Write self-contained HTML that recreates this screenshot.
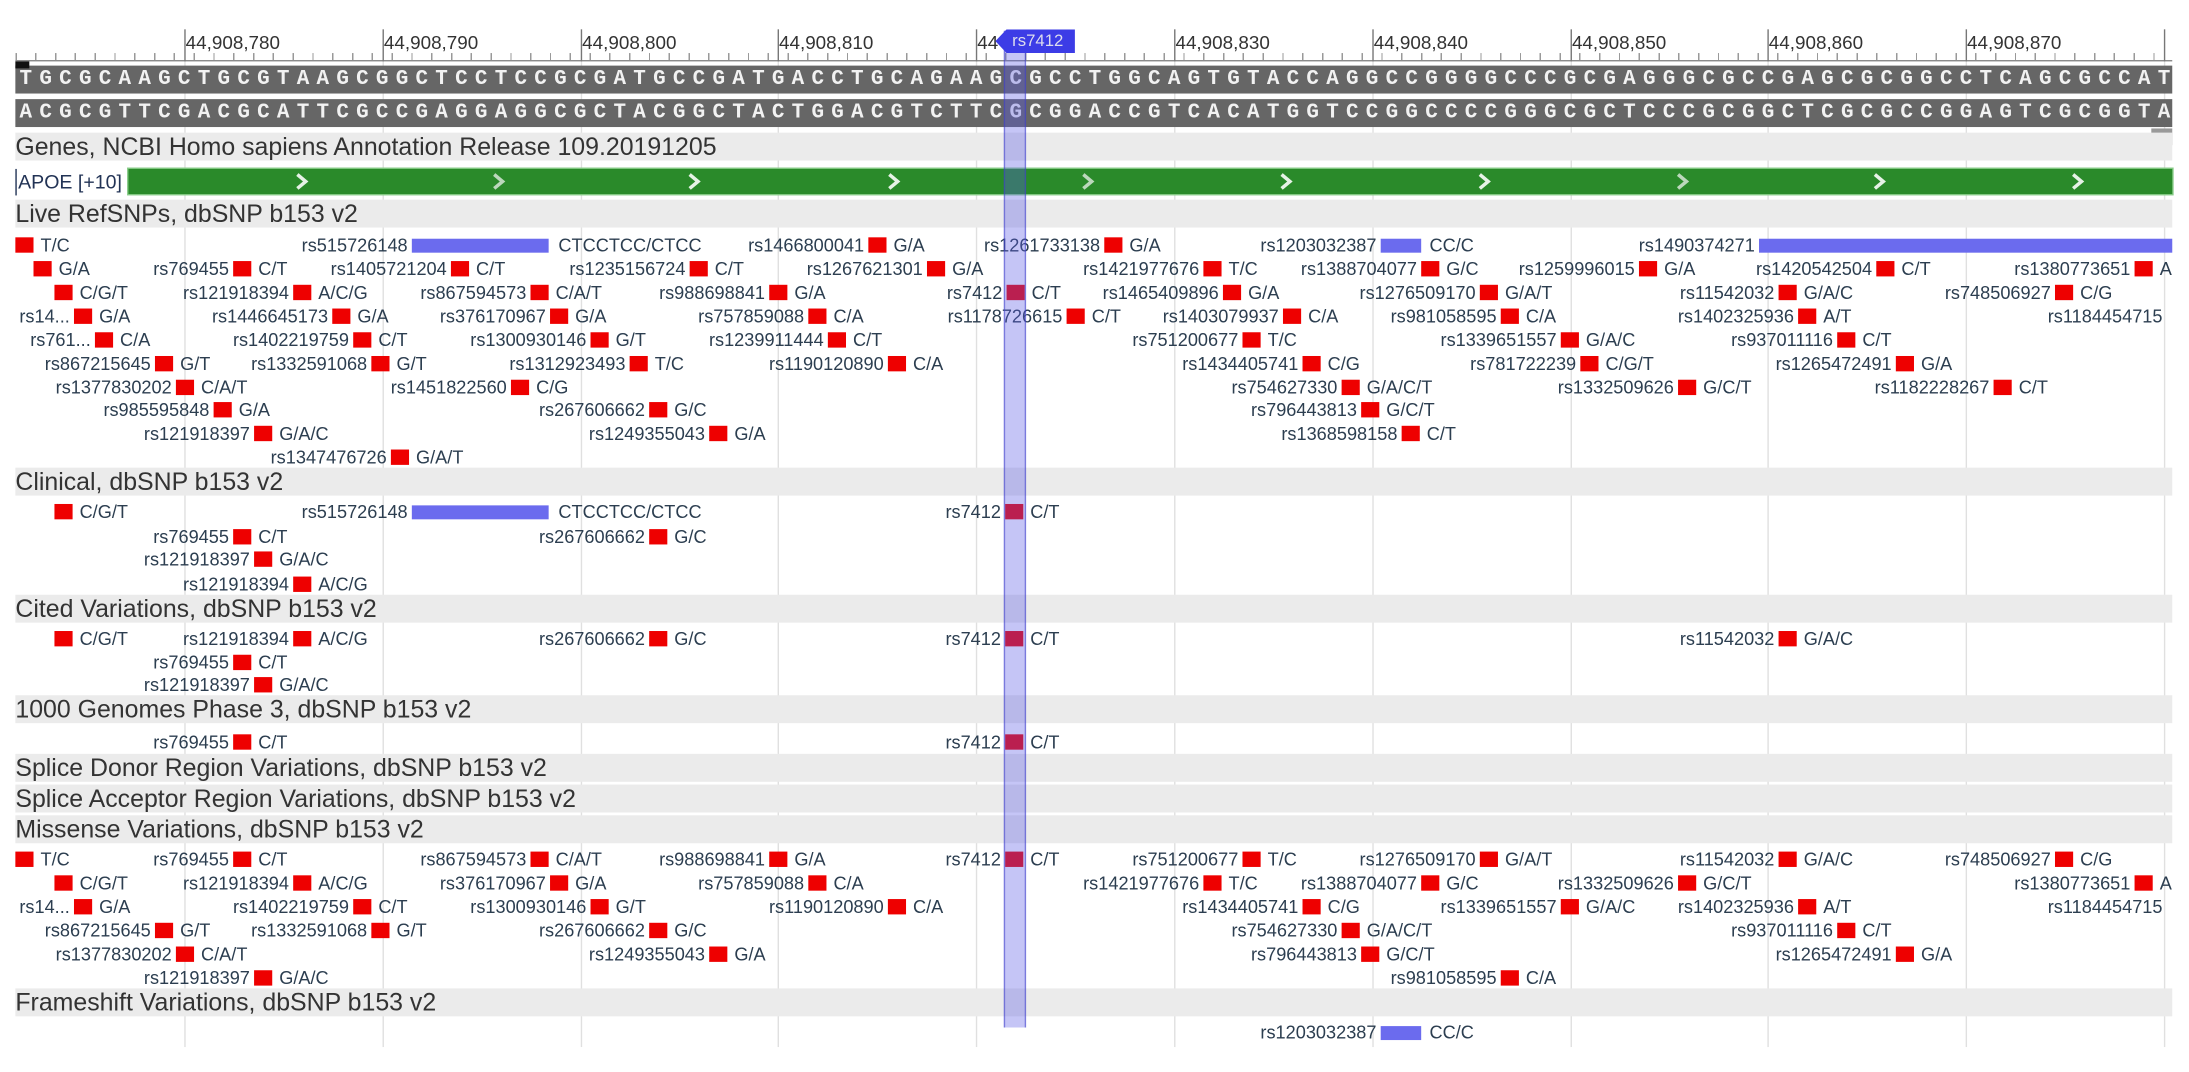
<!DOCTYPE html>
<html><head><meta charset="utf-8">
<style>
html,body{margin:0;padding:0;background:#fff;width:2189px;height:1072px;overflow:hidden}
#w{position:absolute;left:0;top:0;width:1568px;height:768px;transform:scale(1.39605);transform-origin:0 0;font-family:"Liberation Sans",sans-serif}
.a{position:absolute}
.h{position:absolute;left:11px;width:1545px;height:20px;background:#ebebeb;color:#333;font-size:18px;line-height:20px;white-space:nowrap}
.h span{display:inline-block;transform:scaleX(.99);transform-origin:0 50%}
.g{position:absolute;top:44px;height:706px;width:1px;background:#e0e0e0}
.s{position:absolute;height:16px;line-height:16px;font-size:13px;color:#2c3e50;white-space:nowrap}
.s b{font-weight:normal;position:absolute;right:100%;padding-right:3px}
.s i{display:inline-block;width:13px;height:11px;background:#e00;vertical-align:middle;margin-right:5px;position:relative;top:-1px}
.s i.bl{background:#6b6bee;height:10px}
.seq{position:absolute;left:11px;width:1545px;height:20px;background:#666;color:#f2f2f2;font-family:"Liberation Mono",monospace;font-weight:bold;font-size:15px;line-height:20px;letter-spacing:5.18px;padding-left:3px;box-sizing:border-box;white-space:nowrap;overflow:hidden}
.rl{position:absolute;top:23px;font-size:13.5px;color:#333}
.mt{position:absolute;top:21px;height:23px;width:1px;background:#777}
</style></head><body><div id="w">

<!-- grid -->
<div class="g" style="left:132px"></div><div class="g" style="left:274px"></div><div class="g" style="left:416px"></div><div class="g" style="left:557px"></div><div class="g" style="left:699px"></div><div class="g" style="left:841px"></div><div class="g" style="left:983px"></div><div class="g" style="left:1125px"></div><div class="g" style="left:1266px"></div><div class="g" style="left:1408px"></div><div class="g" style="left:1550px"></div>

<!-- ruler -->
<div class="a" style="left:11px;top:43px;width:1545px;height:1px;background:#888"></div>
<div class="a" style="left:11px;top:38px;width:1545px;height:5px;background:repeating-linear-gradient(90deg,#999 0,#999 1px,transparent 1px,transparent 14.18px)"></div>
<div class="mt" style="left:132px"></div><div class="rl" style="left:133px">44,908,780</div>
<div class="mt" style="left:274px"></div><div class="rl" style="left:275px">44,908,790</div>
<div class="mt" style="left:416px"></div><div class="rl" style="left:417px">44,908,800</div>
<div class="mt" style="left:557px"></div><div class="rl" style="left:558px">44,908,810</div>
<div class="mt" style="left:699px"></div><div class="rl" style="left:700px">44</div>
<div class="mt" style="left:841px"></div><div class="rl" style="left:842px">44,908,830</div>
<div class="mt" style="left:983px"></div><div class="rl" style="left:984px">44,908,840</div>
<div class="mt" style="left:1125px"></div><div class="rl" style="left:1126px">44,908,850</div>
<div class="mt" style="left:1266px"></div><div class="rl" style="left:1267px">44,908,860</div>
<div class="mt" style="left:1408px"></div><div class="rl" style="left:1409px">44,908,870</div>
<div class="mt" style="left:1550px"></div>

<!-- sequences -->
<div class="seq" style="top:47px">TGCGCAAGCTGCGTAAGCGGCTCCTCCGCGATGCCGATGACCTGCAGAAGCGCCTGGCAGTGTACCAGGCCGGGGCCCGCGAGGGCGCCGAGCGCGGCCTCAGCGCCAT</div>
<div class="seq" style="top:71px">ACGCGTTCGACGCATTCGCCGAGGAGGCGCTACGGCTACTGGACGTCTTCGCGGACCGTCACATGGTCCGGCCCCGGGCGCTCCCGCGGCTCGCGCCGGAGTCGCGGTA</div>
<div class="a" style="left:11px;top:44px;width:10px;height:5px;background:#111"></div>
<div class="a" style="left:1541px;top:92px;width:15px;height:12px;background:#999"></div>

<!-- headers -->
<div class="h" style="top:95px"><span>Genes, NCBI Homo sapiens Annotation Release 109.20191205</span></div>
<div class="h" style="top:143px"><span>Live RefSNPs, dbSNP b153 v2</span></div>
<div class="h" style="top:335px"><span>Clinical, dbSNP b153 v2</span></div>
<div class="h" style="top:426px"><span>Cited Variations, dbSNP b153 v2</span></div>
<div class="h" style="top:498px"><span>1000 Genomes Phase 3, dbSNP b153 v2</span></div>
<div class="h" style="top:540px"><span>Splice Donor Region Variations, dbSNP b153 v2</span></div>
<div class="h" style="top:562px"><span>Splice Acceptor Region Variations, dbSNP b153 v2</span></div>
<div class="h" style="top:584px"><span>Missense Variations, dbSNP b153 v2</span></div>
<div class="h" style="top:708px"><span>Frameshift Variations, dbSNP b153 v2</span></div>

<!-- APOE -->
<div class="a" style="left:11px;top:121px;height:19px;border-left:1px solid #235;font-size:14px;line-height:19px;color:#235;padding-left:1px">APOE [+10]</div>
<div class="a" style="left:92px;top:121px;width:1464px;height:18px;background:#2a8a2a;box-shadow:0 0 0 1px #8c8"></div>
<svg class="a" style="left:0;top:121px" width="1568" height="18">
<g fill="none" stroke="#e6f2e6" stroke-width="2.5">
<polyline points="213,4 219,9 213,14"/><polyline points="354,4 360,9 354,14" stroke="#bcd8bc"/><polyline points="494,4 500,9 494,14"/><polyline points="637,4 643,9 637,14"/><polyline points="776,4 782,9 776,14" stroke="#bcd8bc"/><polyline points="918,4 924,9 918,14"/><polyline points="1060,4 1066,9 1060,14"/><polyline points="1202,4 1208,9 1202,14" stroke="#bcd8bc"/><polyline points="1343,4 1349,9 1343,14"/><polyline points="1485,4 1491,9 1485,14"/>
</g></svg>

<!-- Live RefSNPs -->
<div class="s" style="left:11px;top:168px"><i></i>T/C</div>
<div class="s" style="left:295px;top:168px"><b>rs515726148</b><i class="bl" style="width:98px;margin-right:7px"></i>CTCCTCC/CTCC</div>
<div class="s" style="left:622px;top:168px"><b>rs1466800041</b><i></i>G/A</div>
<div class="s" style="left:791px;top:168px"><b>rs1261733138</b><i></i>G/A</div>
<div class="s" style="left:989px;top:168px"><b>rs1203032387</b><i class="bl" style="width:29px;margin-right:6px"></i>CC/C</div>
<div class="s" style="left:1260px;top:168px"><b>rs1490374271</b><i class="bl" style="width:296px"></i></div>

<div class="s" style="left:24px;top:185px"><i></i>G/A</div>
<div class="s" style="left:167px;top:185px"><b>rs769455</b><i></i>C/T</div>
<div class="s" style="left:323px;top:185px"><b>rs1405721204</b><i></i>C/T</div>
<div class="s" style="left:494px;top:185px"><b>rs1235156724</b><i></i>C/T</div>
<div class="s" style="left:664px;top:185px"><b>rs1267621301</b><i></i>G/A</div>
<div class="s" style="left:862px;top:185px"><b>rs1421977676</b><i></i>T/C</div>
<div class="s" style="left:1018px;top:185px"><b>rs1388704077</b><i></i>G/C</div>
<div class="s" style="left:1174px;top:185px"><b>rs1259996015</b><i></i>G/A</div>
<div class="s" style="left:1344px;top:185px"><b>rs1420542504</b><i></i>C/T</div>
<div class="s" style="left:1529px;top:185px"><b>rs1380773651</b><i></i>A</div>

<div class="s" style="left:39px;top:202px"><i></i>C/G/T</div>
<div class="s" style="left:210px;top:202px"><b>rs121918394</b><i></i>A/C/G</div>
<div class="s" style="left:380px;top:202px"><b>rs867594573</b><i></i>C/A/T</div>
<div class="s" style="left:551px;top:202px"><b>rs988698841</b><i></i>G/A</div>
<div class="s" style="left:721px;top:202px"><b>rs7412</b><i></i>C/T</div>
<div class="s" style="left:876px;top:202px"><b>rs1465409896</b><i></i>G/A</div>
<div class="s" style="left:1060px;top:202px"><b>rs1276509170</b><i></i>G/A/T</div>
<div class="s" style="left:1274px;top:202px"><b>rs11542032</b><i></i>G/A/C</div>
<div class="s" style="left:1472px;top:202px"><b>rs748506927</b><i></i>C/G</div>

<div class="s" style="left:53px;top:219px"><b>rs14...</b><i></i>G/A</div>
<div class="s" style="left:238px;top:219px"><b>rs1446645173</b><i></i>G/A</div>
<div class="s" style="left:394px;top:219px"><b>rs376170967</b><i></i>G/A</div>
<div class="s" style="left:579px;top:219px"><b>rs757859088</b><i></i>C/A</div>
<div class="s" style="left:764px;top:219px"><b>rs1178726615</b><i></i>C/T</div>
<div class="s" style="left:919px;top:219px"><b>rs1403079937</b><i></i>C/A</div>
<div class="s" style="left:1075px;top:219px"><b>rs981058595</b><i></i>C/A</div>
<div class="s" style="left:1288px;top:219px"><b>rs1402325936</b><i></i>A/T</div>
<div class="s" style="left:1552px;top:219px"><b>rs1184454715</b></div>

<div class="s" style="left:68px;top:236px"><b>rs761...</b><i></i>C/A</div>
<div class="s" style="left:253px;top:236px"><b>rs1402219759</b><i></i>C/T</div>
<div class="s" style="left:423px;top:236px"><b>rs1300930146</b><i></i>G/T</div>
<div class="s" style="left:593px;top:236px"><b>rs1239911444</b><i></i>C/T</div>
<div class="s" style="left:890px;top:236px"><b>rs751200677</b><i></i>T/C</div>
<div class="s" style="left:1118px;top:236px"><b>rs1339651557</b><i></i>G/A/C</div>
<div class="s" style="left:1316px;top:236px"><b>rs937011116</b><i></i>C/T</div>

<div class="s" style="left:111px;top:253px"><b>rs867215645</b><i></i>G/T</div>
<div class="s" style="left:266px;top:253px"><b>rs1332591068</b><i></i>G/T</div>
<div class="s" style="left:451px;top:253px"><b>rs1312923493</b><i></i>T/C</div>
<div class="s" style="left:636px;top:253px"><b>rs1190120890</b><i></i>C/A</div>
<div class="s" style="left:933px;top:253px"><b>rs1434405741</b><i></i>C/G</div>
<div class="s" style="left:1132px;top:253px"><b>rs781722239</b><i></i>C/G/T</div>
<div class="s" style="left:1358px;top:253px"><b>rs1265472491</b><i></i>G/A</div>

<div class="s" style="left:126px;top:270px"><b>rs1377830202</b><i></i>C/A/T</div>
<div class="s" style="left:366px;top:270px"><b>rs1451822560</b><i></i>C/G</div>
<div class="s" style="left:961px;top:270px"><b>rs754627330</b><i></i>G/A/C/T</div>
<div class="s" style="left:1202px;top:270px"><b>rs1332509626</b><i></i>G/C/T</div>
<div class="s" style="left:1428px;top:270px"><b>rs1182228267</b><i></i>C/T</div>

<div class="s" style="left:153px;top:286px"><b>rs985595848</b><i></i>G/A</div>
<div class="s" style="left:465px;top:286px"><b>rs267606662</b><i></i>G/C</div>
<div class="s" style="left:975px;top:286px"><b>rs796443813</b><i></i>G/C/T</div>

<div class="s" style="left:182px;top:303px"><b>rs121918397</b><i></i>G/A/C</div>
<div class="s" style="left:508px;top:303px"><b>rs1249355043</b><i></i>G/A</div>
<div class="s" style="left:1004px;top:303px"><b>rs1368598158</b><i></i>C/T</div>

<div class="s" style="left:280px;top:320px"><b>rs1347476726</b><i></i>G/A/T</div>

<!-- Clinical -->
<div class="s" style="left:39px;top:359px"><i></i>C/G/T</div>
<div class="s" style="left:295px;top:359px"><b>rs515726148</b><i class="bl" style="width:98px;margin-right:7px"></i>CTCCTCC/CTCC</div>
<div class="s" style="left:720px;top:359px"><b>rs7412</b><i></i>C/T</div>
<div class="s" style="left:167px;top:377px"><b>rs769455</b><i></i>C/T</div>
<div class="s" style="left:465px;top:377px"><b>rs267606662</b><i></i>G/C</div>
<div class="s" style="left:182px;top:393px"><b>rs121918397</b><i></i>G/A/C</div>
<div class="s" style="left:210px;top:411px"><b>rs121918394</b><i></i>A/C/G</div>

<!-- Cited -->
<div class="s" style="left:39px;top:450px"><i></i>C/G/T</div>
<div class="s" style="left:210px;top:450px"><b>rs121918394</b><i></i>A/C/G</div>
<div class="s" style="left:465px;top:450px"><b>rs267606662</b><i></i>G/C</div>
<div class="s" style="left:720px;top:450px"><b>rs7412</b><i></i>C/T</div>
<div class="s" style="left:1274px;top:450px"><b>rs11542032</b><i></i>G/A/C</div>
<div class="s" style="left:167px;top:467px"><b>rs769455</b><i></i>C/T</div>
<div class="s" style="left:182px;top:483px"><b>rs121918397</b><i></i>G/A/C</div>

<!-- 1000G -->
<div class="s" style="left:167px;top:524px"><b>rs769455</b><i></i>C/T</div>
<div class="s" style="left:720px;top:524px"><b>rs7412</b><i></i>C/T</div>

<!-- Missense -->
<div class="s" style="left:11px;top:608px"><i></i>T/C</div>
<div class="s" style="left:167px;top:608px"><b>rs769455</b><i></i>C/T</div>
<div class="s" style="left:380px;top:608px"><b>rs867594573</b><i></i>C/A/T</div>
<div class="s" style="left:551px;top:608px"><b>rs988698841</b><i></i>G/A</div>
<div class="s" style="left:720px;top:608px"><b>rs7412</b><i></i>C/T</div>
<div class="s" style="left:890px;top:608px"><b>rs751200677</b><i></i>T/C</div>
<div class="s" style="left:1060px;top:608px"><b>rs1276509170</b><i></i>G/A/T</div>
<div class="s" style="left:1274px;top:608px"><b>rs11542032</b><i></i>G/A/C</div>
<div class="s" style="left:1472px;top:608px"><b>rs748506927</b><i></i>C/G</div>

<div class="s" style="left:39px;top:625px"><i></i>C/G/T</div>
<div class="s" style="left:210px;top:625px"><b>rs121918394</b><i></i>A/C/G</div>
<div class="s" style="left:394px;top:625px"><b>rs376170967</b><i></i>G/A</div>
<div class="s" style="left:579px;top:625px"><b>rs757859088</b><i></i>C/A</div>
<div class="s" style="left:862px;top:625px"><b>rs1421977676</b><i></i>T/C</div>
<div class="s" style="left:1018px;top:625px"><b>rs1388704077</b><i></i>G/C</div>
<div class="s" style="left:1202px;top:625px"><b>rs1332509626</b><i></i>G/C/T</div>
<div class="s" style="left:1529px;top:625px"><b>rs1380773651</b><i></i>A</div>

<div class="s" style="left:53px;top:642px"><b>rs14...</b><i></i>G/A</div>
<div class="s" style="left:253px;top:642px"><b>rs1402219759</b><i></i>C/T</div>
<div class="s" style="left:423px;top:642px"><b>rs1300930146</b><i></i>G/T</div>
<div class="s" style="left:636px;top:642px"><b>rs1190120890</b><i></i>C/A</div>
<div class="s" style="left:933px;top:642px"><b>rs1434405741</b><i></i>C/G</div>
<div class="s" style="left:1118px;top:642px"><b>rs1339651557</b><i></i>G/A/C</div>
<div class="s" style="left:1288px;top:642px"><b>rs1402325936</b><i></i>A/T</div>
<div class="s" style="left:1552px;top:642px"><b>rs1184454715</b></div>

<div class="s" style="left:111px;top:659px"><b>rs867215645</b><i></i>G/T</div>
<div class="s" style="left:266px;top:659px"><b>rs1332591068</b><i></i>G/T</div>
<div class="s" style="left:465px;top:659px"><b>rs267606662</b><i></i>G/C</div>
<div class="s" style="left:961px;top:659px"><b>rs754627330</b><i></i>G/A/C/T</div>
<div class="s" style="left:1316px;top:659px"><b>rs937011116</b><i></i>C/T</div>

<div class="s" style="left:126px;top:676px"><b>rs1377830202</b><i></i>C/A/T</div>
<div class="s" style="left:508px;top:676px"><b>rs1249355043</b><i></i>G/A</div>
<div class="s" style="left:975px;top:676px"><b>rs796443813</b><i></i>G/C/T</div>
<div class="s" style="left:1358px;top:676px"><b>rs1265472491</b><i></i>G/A</div>

<div class="s" style="left:182px;top:693px"><b>rs121918397</b><i></i>G/A/C</div>
<div class="s" style="left:1075px;top:693px"><b>rs981058595</b><i></i>C/A</div>

<!-- Frameshift -->
<div class="s" style="left:989px;top:732px"><b>rs1203032387</b><i class="bl" style="width:29px;margin-right:6px"></i>CC/C</div>

<!-- highlight -->
<div class="a" style="left:719px;top:22px;width:14px;height:714px;background:rgba(90,90,230,0.35);border-left:1px solid rgba(60,60,200,.55);border-right:1px solid rgba(60,60,200,.55)"></div>
<div class="a" style="left:713px;top:21px;width:57px;height:17px;background:#3c3ce6;color:#dde;font-size:12px;line-height:17px;padding-left:12px;box-sizing:border-box;clip-path:polygon(0 50%,8px 0,100% 0,100% 100%,8px 100%)">rs7412</div>

</div></body></html>
